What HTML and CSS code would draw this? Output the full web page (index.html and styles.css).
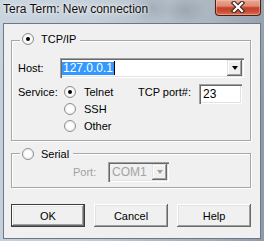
FILE: index.html
```html
<!DOCTYPE html>
<html>
<head>
<meta charset="utf-8">
<title>Tera Term: New connection</title>
<link rel="stylesheet" href="styles.css">
</head>
<body>
<div class="window">
  <div class="titlebar">
    <span class="title">Tera Term: New connection</span>
    <div class="close">
      <svg width="16" height="12" viewBox="0 0 16 12">
        <path d="M4 2 L12 10 M12 2 L4 10" stroke="#3d2b27" stroke-width="4.5" stroke-linecap="square" fill="none"/>
        <path d="M4 2 L12 10 M12 2 L4 10" stroke="#ffffff" stroke-width="2.2" stroke-linecap="square" fill="none"/>
      </svg>
    </div>
  </div>
  <div class="client">
    <div class="group g1">
      <div class="legend"><span class="radio on"></span><span>TCP/IP</span></div>
      <div class="host-row">
        <span class="lbl host-lbl">Host:</span>
        <div class="combo host-combo">
          <span class="sel">127.0.0.1</span><span class="caret"></span>
          <span class="drop"><i class="tri"></i></span>
        </div>
      </div>
      <div class="service">
        <span class="lbl svc-lbl">Service:</span>
        <div class="opt r1"><span class="radio on"></span><span>Telnet</span></div>
        <span class="lbl port-lbl">TCP port#:</span>
        <div class="edit port">23</div>
        <div class="opt r2"><span class="radio"></span><span>SSH</span></div>
        <div class="opt r3"><span class="radio"></span><span>Other</span></div>
      </div>
    </div>
    <div class="group g2">
      <div class="legend"><span class="radio"></span><span>Serial</span></div>
      <div class="serial-row">
        <span class="lbl dis port-name">Port:</span>
        <div class="combo com">
          <span class="com-text">COM1</span>
          <span class="drop"><i class="tri dis-tri"></i></span>
        </div>
      </div>
    </div>
    <div class="buttons">
      <button class="btn default">OK</button>
      <button class="btn">Cancel</button>
      <button class="btn">Help</button>
    </div>
  </div>
</div>
</body>
</html>
```

FILE: styles.css
```css
html, body {
  margin: 0;
  padding: 0;
}

body {
  width: 264px;
  height: 241px;
  overflow: hidden;
  font-family: "Liberation Sans", Arial, sans-serif;
  font-size: 11px;
  color: #000;
}

.window {
  position: relative;
  width: 264px;
  height: 241px;
  overflow: hidden;
  background:
    radial-gradient(ellipse 22px 14px at 150px 8px, rgba(120,132,144,0.35), rgba(120,132,144,0) 100%),
    radial-gradient(ellipse 22px 14px at 185px 10px, rgba(120,132,144,0.35), rgba(120,132,144,0) 100%),
    linear-gradient(180deg, rgba(255,255,255,0.10) 0%, rgba(255,255,255,0) 40%),
    linear-gradient(90deg, #c4d0db 0%, #bfcbd6 35%, #aeb9c5 60%, #a3afbb 80%, #8f9ba8 100%);
}

.titlebar {
  position: relative;
  height: 23px;
  display: flex;
  justify-content: space-between;
  align-items: flex-start;
  padding: 0 3px;
  box-sizing: border-box;
}

.title {
  font-family: "Liberation Sans", Arial, sans-serif;
  font-size: 12px;
  line-height: 16px;
  padding-top: 1px;
  color: #101010;
  text-shadow: 0 0 6px rgba(255,255,255,0.9), 0 0 3px rgba(255,255,255,0.8);
}

.close {
  width: 46px;
  height: 16px;
  box-sizing: border-box;
  border: 1px solid #4e1d14;
  border-top: none;
  border-radius: 0 0 4px 4px;
  background: linear-gradient(180deg, #e9a996 0%, #df8a72 40%, #c4432a 52%, #c94c31 75%, #d9745a 100%);
  box-shadow: inset 0 0 0 1px rgba(255,200,180,0.45);
  display: flex;
  align-items: center;
  justify-content: center;
  padding-bottom: 2px;
}

.client {
  position: relative;
  margin: 0 3px;
  width: 258px;
  height: 216px;
  box-sizing: border-box;
  border: 1px solid #6b7885;
  background: #f0f0f0;
  padding: 16px 8px 0 7px;
}

.group {
  width: 240px;
  box-sizing: border-box;
  border: 1px solid #a7a7a7;
  box-shadow: inset 1px 1px 0 #fff, 1px 1px 0 #fff;
}

.g1 { height: 101px; }
.g2 { height: 35px; margin-top: 12px; }

.legend {
  display: flex;
  align-items: center;
  gap: 7px;
  width: fit-content;
  height: 12px;
  margin: -8px 0 0 8px;
  padding: 0 4px 0 2px;
  background: #f0f0f0;
}

.g2 .legend { margin-top: -6px; }

.radio {
  flex: none;
  width: 12px;
  height: 12px;
  box-sizing: border-box;
  border-radius: 50%;
  border: 1px solid #8e8f8f;
  background: radial-gradient(circle at 50% 50%, #ffffff 35%, #e4e4e4 100%);
  display: grid;
  place-items: center;
}

.radio.on::after {
  content: "";
  width: 4px;
  height: 4px;
  border-radius: 50%;
  background: #000;
}

.host-row {
  display: flex;
  align-items: center;
  margin-top: 13px;
  padding-left: 6px;
  height: 20px;
}

.host-lbl { width: 42px; }

.combo {
  position: relative;
  box-sizing: border-box;
  height: 20px;
  display: flex;
  align-items: center;
  background: #fff;
  padding: 2px;
  box-shadow:
    inset 1px 1px 0 #a0a0a0,
    inset 2px 2px 0 #696969,
    inset -1px -1px 0 #ffffff,
    inset -2px -2px 0 #e3e3e3;
}

.host-combo { width: 184px; }

.sel {
  font-size: 12px;
  line-height: 13px;
  height: 13px;
  background: #3399ff;
  color: #fff;
  padding: 0 1px;
}

.caret {
  width: 1px;
  height: 14px;
  background: #000;
}

.drop {
  margin-left: auto;
  width: 15px;
  height: 16px;
  box-sizing: border-box;
  background: #f0f0f0;
  display: grid;
  place-items: center;
  box-shadow:
    inset -1px -1px 0 #696969,
    inset 1px 1px 0 #e3e3e3,
    inset -2px -2px 0 #a0a0a0,
    inset 2px 2px 0 #ffffff;
}

.tri {
  width: 0;
  height: 0;
  border-left: 3.5px solid transparent;
  border-right: 3.5px solid transparent;
  border-top: 4px solid #000;
}

.dis-tri { border-top-color: #a0a0a0; }

.service {
  display: grid;
  grid-template-columns: 46px 74px 61px 43px;
  grid-template-rows: 17px 17px 17px;
  margin-top: 5px;
  padding-left: 6px;
  align-items: center;
}

.svc-lbl { grid-column: 1; grid-row: 1; }

.opt {
  display: flex;
  align-items: center;
  gap: 8px;
  grid-column: 2;
}

.r1 { grid-row: 1; }
.r2 { grid-row: 2; }
.r3 { grid-row: 3; }

.port-lbl { grid-column: 3; grid-row: 1; }

.edit {
  box-sizing: border-box;
  background: #fff;
  font-size: 12px;
  line-height: 16px;
  padding: 2px 4px;
  box-shadow:
    inset 1px 1px 0 #a0a0a0,
    inset 2px 2px 0 #696969,
    inset -1px -1px 0 #ffffff,
    inset -2px -2px 0 #e3e3e3;
}

.port {
  grid-column: 4;
  grid-row: 1;
  align-self: start;
  margin-top: 1px;
  width: 43px;
  height: 20px;
}

.serial-row {
  display: flex;
  align-items: center;
  margin-top: 2px;
  padding-left: 61px;
  height: 20px;
}

.port-name { width: 35px; }

.dis { color: #a0a0a0; }

.com {
  width: 61px;
  background: #f0f0f0;
}

.com-text {
  padding-left: 2px;
  font-size: 12px;
  color: #a3a3a3;
}

.buttons {
  display: flex;
  gap: 9px;
  margin-top: 16px;
}

.btn {
  width: 74px;
  height: 23px;
  padding: 0;
  margin: 0;
  border: none;
  background: #f0f0f0;
  font-family: "Liberation Sans", Arial, sans-serif;
  font-size: 11px;
  color: #000;
  box-shadow:
    inset -1px -1px 0 #696969,
    inset 1px 1px 0 #ffffff,
    inset -2px -2px 0 #a0a0a0,
    inset 2px 2px 0 #e3e3e3;
}

.btn.default {
  box-shadow:
    inset 0 0 0 1px #3c3c3c,
    inset -2px -2px 0 #696969,
    inset 2px 2px 0 #ffffff,
    inset -3px -3px 0 #a0a0a0,
    inset 3px 3px 0 #e3e3e3;
}
```
